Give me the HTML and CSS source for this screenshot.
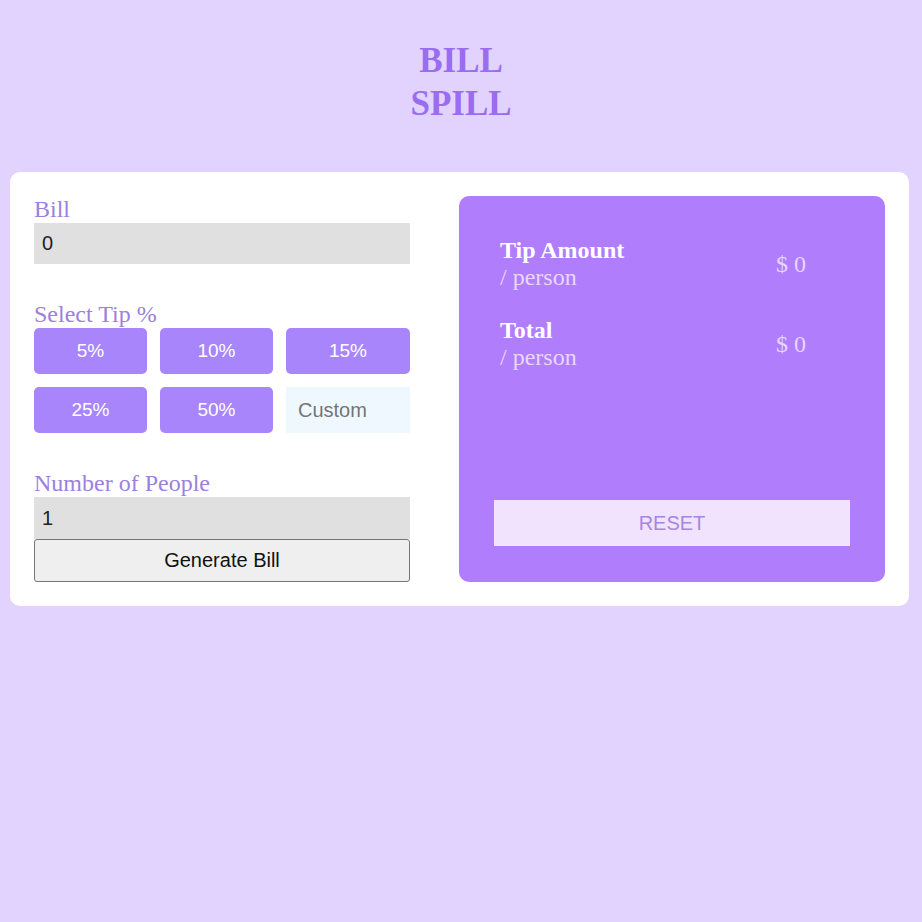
FILE: index.html
```html
<!DOCTYPE html>
<html lang="en">
<head>
  <meta charset="UTF-8">
  <meta name="viewport" content="width=device-width, initial-scale=1.0">
  <title>Bill Spill</title>
  <link rel="stylesheet" href="styles.css">
</head>
<body>
  <h1 class="title">BILL SPILL</h1>
  <div class="container">
    <div class="inputs">
      <div class="group">
        <label for="bill">Bill</label>
        <input type="number" id="bill" class="field" value="0">
      </div>
      <div class="group">
        <label>Select Tip %</label>
        <div class="tips">
          <button class="tip">5%</button>
          <button class="tip">10%</button>
          <button class="tip">15%</button>
          <button class="tip">25%</button>
          <button class="tip">50%</button>
          <input type="number" class="custom" placeholder="Custom">
        </div>
      </div>
      <div class="group last">
        <label for="people">Number of People</label>
        <input type="number" id="people" class="field" value="1">
        <button id="generate">Generate Bill</button>
      </div>
    </div>
    <div class="result">
      <div class="row">
        <div>
          <div class="name">Tip Amount</div>
          <div class="per">/ person</div>
        </div>
        <div class="amount" id="tipAmount">$ 0</div>
      </div>
      <div class="row">
        <div>
          <div class="name">Total</div>
          <div class="per">/ person</div>
        </div>
        <div class="amount" id="total">$ 0</div>
      </div>
      <button id="reset">RESET</button>
    </div>
  </div>
</body>
</html>
```

FILE: styles.css
```css
body {
  margin: 0;
  background-color: #e2d3fe;
  font-family: "Liberation Serif", "Times New Roman", serif;
}
.title {
  width: 120px;
  margin: 39px auto 47px;
  font-size: 35px;
  line-height: 43px;
  text-align: center;
  color: #9a6df0;
}
.container {
  margin: 0 13px 0 10px;
  padding: 24px;
  background-color: #fff;
  border-radius: 10px;
  display: grid;
  grid-template-columns: 376px 426px;
  justify-content: space-between;
}
.inputs {
  display: flex;
  flex-direction: column;
}
.group {
  margin-bottom: 37px;
}
.group.last {
  margin-bottom: 0;
}
label {
  display: block;
  font-size: 24px;
  color: #9c7fe0;
}
.field {
  display: block;
  box-sizing: border-box;
  width: 100%;
  height: 41px;
  padding: 0 8px;
  border: none;
  background-color: #e0e0e0;
  font-family: "Liberation Sans", Arial, sans-serif;
  font-size: 20px;
  color: #222;
}
.tips {
  display: grid;
  grid-template-columns: 113px 113px 1fr;
  gap: 13px;
}
.tip {
  height: 46px;
  border: none;
  border-radius: 5px;
  background-color: #a885fb;
  color: #fff;
  font-family: "Liberation Sans", Arial, sans-serif;
  font-size: 19px;
  cursor: pointer;
}
.custom {
  box-sizing: border-box;
  width: 100%;
  height: 46px;
  padding: 0 12px;
  border: none;
  background-color: #f0f8ff;
  font-family: "Liberation Sans", Arial, sans-serif;
  font-size: 20px;
}
.custom::placeholder {
  color: #757575;
}
#people {
  height: 42px;
}
#generate {
  width: 100%;
  height: 43px;
  border: 1px solid #767676;
  border-radius: 3px;
  background-color: #efefef;
  font-family: "Liberation Sans", Arial, sans-serif;
  font-size: 20px;
  color: #111;
}
.result {
  display: flex;
  flex-direction: column;
  padding: 41px 35px 36px;
  background-color: #b07dfd;
  border-radius: 10px;
}
.row {
  display: flex;
  justify-content: space-between;
  align-items: center;
  padding: 0 44px 0 6px;
  margin-bottom: 26px;
  font-size: 24px;
}
.name {
  font-weight: bold;
  color: #fff;
}
.per {
  color: #e7d8fb;
}
.amount {
  color: #e7d6fb;
}
#reset {
  margin-top: auto;
  height: 46px;
  border: none;
  background-color: #f1e3fe;
  color: #a886e0;
  font-family: "Liberation Sans", Arial, sans-serif;
  font-size: 20px;
  cursor: pointer;
}
```
